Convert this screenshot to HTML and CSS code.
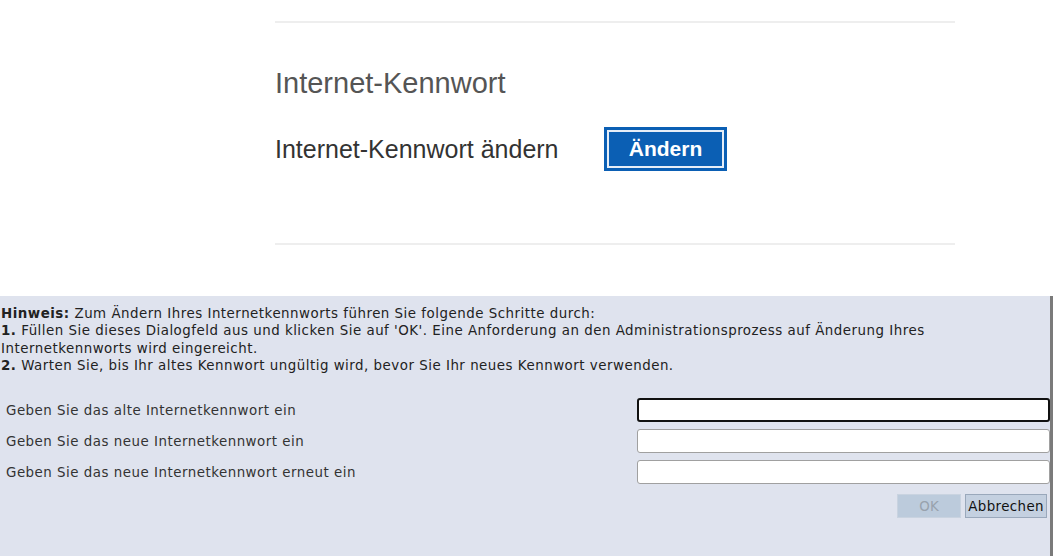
FILE: index.html
```html
<!DOCTYPE html>
<html lang="de">
<head>
<meta charset="utf-8">
<link rel="stylesheet" href="styles.css">
</head>
<body>
<section class="top">
  <hr class="rule">
  <h2 class="title">Internet-Kennwort</h2>
  <div class="change-row">
    <span class="change-label">Internet-Kennwort ändern</span>
    <button class="change-btn"><span>Ändern</span></button>
  </div>
  <hr class="rule rule-bottom">
</section>
<section class="dialog">
  <p class="hint"><b>Hinweis:</b> Zum Ändern Ihres Internetkennworts führen Sie folgende Schritte durch:<br><b>1.</b> Füllen Sie dieses Dialogfeld aus und klicken Sie auf 'OK'. Eine Anforderung an den Administrationsprozess auf Änderung Ihres Internetkennworts wird eingereicht.<br><b>2.</b> Warten Sie, bis Ihr altes Kennwort ungültig wird, bevor Sie Ihr neues Kennwort verwenden.</p>
  <div class="fields">
    <label class="field-label">Geben Sie das alte Internetkennwort ein</label>
    <input class="field focus" type="password">
    <label class="field-label">Geben Sie das neue Internetkennwort ein</label>
    <input class="field" type="password">
    <label class="field-label">Geben Sie das neue Internetkennwort erneut ein</label>
    <input class="field" type="password">
  </div>
  <div class="actions">
    <button class="dbtn disabled">OK</button>
    <button class="dbtn">Abbrechen</button>
  </div>
</section>
</body>
</html>
```
FILE: styles.css
```css
html, body {
  margin: 0;
  padding: 0;
  background: #fff;
  width: 1056px;
  height: 556px;
  overflow: hidden;
}
.top {
  margin-left: 275px;
  width: 680px;
  padding-top: 21px;
  font-family: "Liberation Sans", Arial, sans-serif;
}
.rule {
  margin: 0;
  border: 0;
  height: 2px;
  background: #eeeeee;
}
.title {
  margin: 43px 0 0 0;
  font-weight: normal;
  font-size: 29px;
  line-height: 34px;
  color: #555;
}
.change-row {
  display: flex;
  align-items: center;
  margin-top: 27px;
}
.change-label {
  font-size: 25px;
  color: #333;
  width: 329px;
}
.change-btn {
  background: #0b5fb4;
  border: 0;
  padding: 3px;
  height: 44px;
  width: 123px;
  cursor: pointer;
}
.change-btn span {
  display: flex;
  align-items: center;
  justify-content: center;
  height: 100%;
  border: 2px solid #e6eef8;
  box-sizing: border-box;
  color: #fff;
  font-family: "Liberation Sans", Arial, sans-serif;
  font-weight: bold;
  font-size: 21px;
}
.rule-bottom {
  margin-top: 72px;
}
.dialog {
  margin-top: 51px;
  height: 260px;
  width: 1050px;
  background: #dfe3ee;
  border-right: 3px solid #7a7a7a;
  font-family: "DejaVu Sans", Verdana, sans-serif;
  font-size: 13.4px;
  letter-spacing: 0.5px;
  color: #222;
}
.hint {
  margin: 0;
  padding: 9px 0 0 1px;
  line-height: 17.3px;
  width: 940px;
}
.fields {
  display: grid;
  grid-template-columns: 637px 413px;
  row-gap: 7px;
  margin-top: 24px;
  align-items: center;
}
.field-label {
  padding-left: 6px;
  color: #333;
}
.field {
  height: 24px;
  box-sizing: border-box;
  border: 1px solid #a0a0a0;
  border-radius: 3px;
  background: #fff;
  margin: 0;
  padding: 0;
}
.field.focus {
  border: 2px solid #111;
}
.actions {
  display: flex;
  justify-content: flex-end;
  gap: 4px;
  margin-top: 10px;
  padding-right: 3px;
}
.dbtn {
  font-family: "DejaVu Sans", Verdana, sans-serif;
  font-size: 13.4px;
  letter-spacing: 0.4px;
  height: 24px;
  padding: 0 2px;
  background: #c4d0e0;
  border: 1px solid #9aa8bb;
  color: #111;
  border-radius: 0;
}
.dbtn.disabled {
  width: 64px;
  background: #bccbdc;
  border-color: #c9d3e0;
  color: #98a2ad;
}
```
